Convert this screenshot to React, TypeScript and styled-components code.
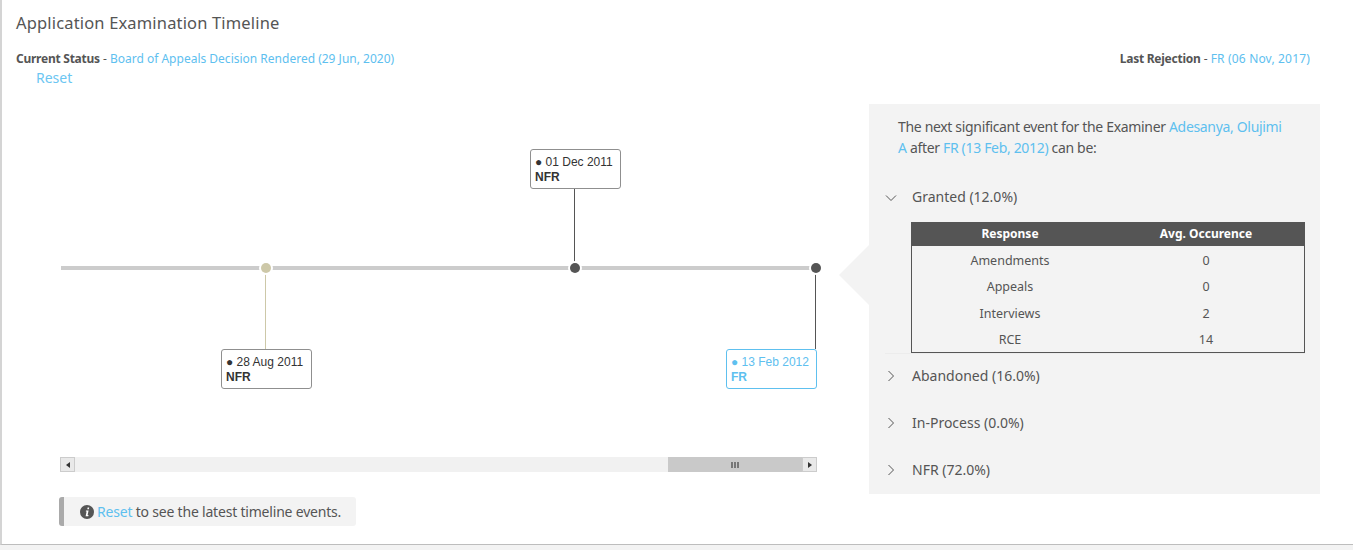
import React from "react";
import styled, { createGlobalStyle } from "styled-components";

const Global = createGlobalStyle`
  html, body { margin: 0; padding: 0; background: #f3f3f3; }
  body { font-family: "Noto Sans", Roboto, sans-serif; color: #555; }
`;
const Card = styled.div`
  box-sizing: border-box; width: 1353px; height: 545px; background: #fff;
  border-left: 2px solid #d4d4d4; border-bottom: 1px solid #bdbdbd;
  box-shadow: 0 1px 2px rgba(0,0,0,.2); padding: 13px 0 0 14px; overflow: hidden;
`;
const Title = styled.h1`
  margin: 0; font-size: 16.5px; line-height: 20px; font-weight: 400; color: #555; letter-spacing: .16px;
`;
const StatusRow = styled.div`
  display: flex; justify-content: space-between; margin-top: 18px; padding-right: 43px;
  font-size: 12px; line-height: 16px;
`;
const Label = styled.b`font-weight: 700; color: #555; letter-spacing: -.25px;`;
const Link = styled.span<{ $wide?: boolean }>`
  color: #5ec0ef; ${p => (p.$wide ? "letter-spacing: .17px;" : "")}
`;
const ResetLink = styled.div`
  margin: 2px 0 0 20px; font-size: 14px; line-height: 18px; color: #6cc6f2;
`;
const Body = styled.div`display: flex; margin-top: 17px;`;
const Left = styled.div`width: 853px; flex: none; display: flex; flex-direction: column;`;
const Canvas = styled.div`position: relative; height: 353px;`;
const Track = styled.div`position: absolute; left: 45px; top: 162px; width: 750px; height: 4px; background: #ccc;`;
const Dot = styled.div<{ $x: number; $c: string }>`
  position: absolute; left: ${p => p.$x}px; top: 159px; width: 10px; height: 10px; border-radius: 50%;
  background: ${p => p.$c}; box-shadow: 0 0 0 2px #fff;
`;
const Stem = styled.div<{ $x: number; $y: number; $h: number; $c: string }>`
  position: absolute; left: ${p => p.$x}px; top: ${p => p.$y}px; width: 1px; height: ${p => p.$h}px; background: ${p => p.$c};
`;
const EventBox = styled.div<{ $x: number; $y: number; $active?: boolean }>`
  position: absolute; left: ${p => p.$x}px; top: ${p => p.$y}px; box-sizing: border-box; width: 91px; height: 40px;
  border: 1px solid ${p => (p.$active ? "#5ec0ef" : "#8f8f8f")}; border-radius: 3px; background: #fff;
  padding: 5px 4px 4px; font-family: "Liberation Sans", Arial, sans-serif; font-size: 12px; line-height: 15px;
  color: ${p => (p.$active ? "#5ec0ef" : "#333")}; white-space: nowrap;
  b { display: block; font-weight: 700; }
`;
const Scrollbar = styled.div`
  display: flex; width: 757px; height: 15px; margin-left: 44px; background: #f1f1f1;
`;
const ScrollBtn = styled.div`
  box-sizing: border-box; width: 15px; height: 15px; border: 1px solid #ccc; background: #e9e9e9; flex: none;
  display: flex; align-items: center; justify-content: center;
`;
const ScrollGap = styled.div`flex: 1;`;
const Thumb = styled.div`
  width: 149px; background: #c9c9c9; display: flex; align-items: center;
`;
const Grip = styled.div`
  flex: 1; display: flex; gap: 1px; justify-content: center;
  i { width: 2px; height: 6px; background: #777; display: block; }
`;
const Info = styled.div`
  display: inline-flex; align-items: center; align-self: flex-start; gap: 3px; margin: 25px 0 0 43px; height: 29px; box-sizing: border-box;
  width: 297px; padding-left: 16px; background: #f3f3f3; border-left: 5px solid #aaa; border-radius: 3px;
  font-size: 14px; letter-spacing: -.2px;
`;
const Side = styled.aside`
  position: relative; box-sizing: border-box; width: 451px; height: 390px; background: #f3f3f3; padding: 12px 15px 0 16px; flex: none;
  &::before {
    content: ""; position: absolute; left: -30px; top: 141px; width: 0; height: 0;
    border-style: solid; border-width: 30px 30px 30px 0; border-color: transparent #f3f3f3 transparent transparent;
  }
`;
const Intro = styled.p`
  margin: 0 0 0 13px; font-size: 14px; line-height: 21px; color: #555; width: 392px; letter-spacing: -.33px;
`;
const AccHead = styled.div<{ $gap: number }>`
  display: flex; align-items: center; gap: 15px; height: 20px; margin-top: ${p => p.$gap}px; font-size: 14px; color: #555;
`;
const ChevronIcon = styled.svg<{ $open?: boolean }>`
  width: 12px; height: 12px; margin-top: ${p => (p.$open ? 4 : 2)}px; flex: none; fill: none; stroke: #555; stroke-width: 1;
`;
const Table = styled.table`
  box-sizing: border-box; width: 394px; margin: 16px 0 0 26px; border-collapse: collapse; border: 1px solid #555; color: #555;
  table-layout: fixed;
  th { background: #555; color: #fff; font-weight: 700; height: 23px; padding: 0 0 1px; font-size: 12px; box-sizing: border-box; }
  td { height: 26.5px; padding: 0; text-align: center; font-size: 12.5px; box-sizing: border-box; }
  tbody tr:first-child td { height: 27.5px; padding-top: 2px; }
  tbody tr:nth-child(3) td { padding-top: 1px; }
`;
const Divider = styled.div`height: 1px; background: #ececec;`;

const Chevron = ({ open }: { open?: boolean }) => (
  <ChevronIcon viewBox="0 0 12 12" $open={open}>
    <path d={open ? "M1 3.5 6 8.5 11 3.5" : "M3.5 1 8.5 6 3.5 11"} />
  </ChevronIcon>
);

const rows: [string, number][] = [["Amendments", 0], ["Appeals", 0], ["Interviews", 2], ["RCE", 14]];

export default function App() {
  return (
    <Card>
      <Global />
      <Title>Application Examination Timeline</Title>
      <StatusRow>
        <span><Label>Current Status</Label> - <Link>Board of Appeals Decision Rendered (29 Jun, 2020)</Link></span>
        <span><Label>Last Rejection</Label> - <Link $wide>FR (06 Nov, 2017)</Link></span>
      </StatusRow>
      <ResetLink>Reset</ResetLink>
      <Body>
        <Left>
          <Canvas>
            <Track />
            <Stem $x={249} $y={165} $h={80} $c="#cdc8a8" />
            <Stem $x={558} $y={85} $h={80} $c="#555" />
            <Stem $x={799} $y={165} $h={80} $c="#555" />
            <Dot $x={245} $c="#cdc8a8" />
            <Dot $x={554} $c="#555" />
            <Dot $x={795} $c="#555" />
            <EventBox $x={514} $y={45}>● 01 Dec 2011<b>NFR</b></EventBox>
            <EventBox $x={205} $y={245}>● 28 Aug 2011<b>NFR</b></EventBox>
            <EventBox $x={710} $y={245} $active>● 13 Feb 2012<b>FR</b></EventBox>
          </Canvas>
          <Scrollbar>
            <ScrollBtn>
              <svg width="4" height="6" viewBox="0 0 4 6"><path d="M4 0v6L0 3z" fill="#333" /></svg>
            </ScrollBtn>
            <ScrollGap />
            <Thumb>
              <Grip><i /><i /><i /></Grip>
              <ScrollBtn>
                <svg width="4" height="6" viewBox="0 0 4 6"><path d="M0 0v6l4-3z" fill="#333" /></svg>
              </ScrollBtn>
            </Thumb>
          </Scrollbar>
          <Info>
            <svg width="14" height="14" viewBox="0 0 14 14">
              <circle cx="7" cy="7" r="7" fill="#555" />
              <path d="M7.6 2.6h1.6l-.3 1.6H7.3zM6 5.5h2.6l-1 4.6h.9l-.2 1.2H5.6l1-4.7h-.8z" fill="#fff" />
            </svg>
            <span><Link>Reset</Link> to see the latest timeline events.</span>
          </Info>
        </Left>
        <Side>
          <Intro>
            The next significant event for the Examiner <Link>Adesanya, Olujimi A</Link> after <Link>FR (13 Feb, 2012)</Link> can be:
          </Intro>
          <AccHead $gap={28}><Chevron open />Granted (12.0%)</AccHead>
          <Table>
            <thead><tr><th>Response</th><th>Avg. Occurence</th></tr></thead>
            <tbody>
              {rows.map(([n, v]) => <tr key={n}><td>{n}</td><td>{v}</td></tr>)}
            </tbody>
          </Table>
          <Divider />
          <AccHead $gap={11}><Chevron />Abandoned (16.0%)</AccHead>
          <AccHead $gap={27}><Chevron />In-Process (0.0%)</AccHead>
          <AccHead $gap={27}><Chevron />NFR (72.0%)</AccHead>
        </Side>
      </Body>
    </Card>
  );
}
